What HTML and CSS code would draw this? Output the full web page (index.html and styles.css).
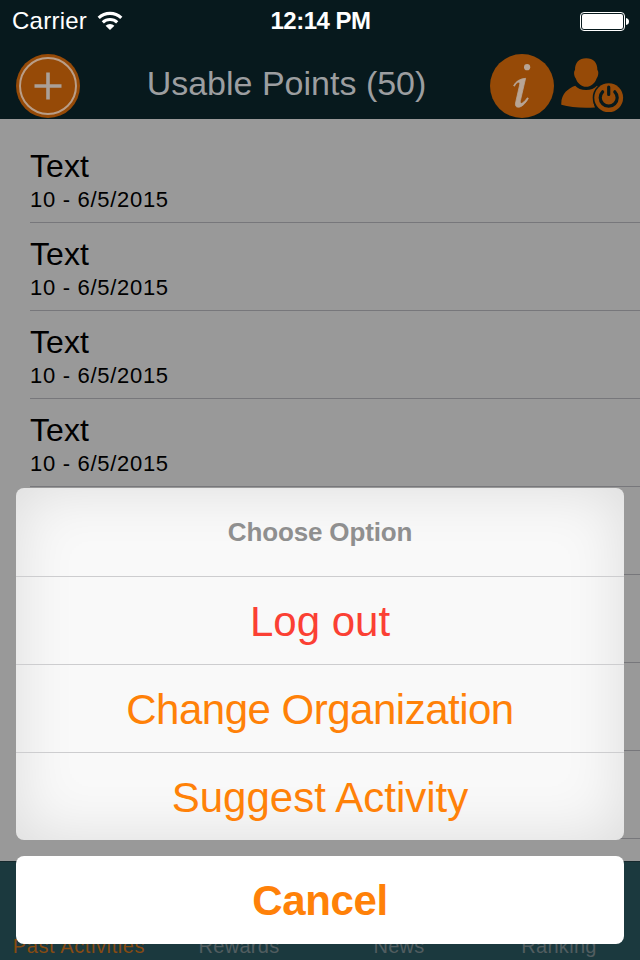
FILE: index.html
```html
<!DOCTYPE html>
<html lang="en">
<head>
    <meta charset="UTF-8">
    <meta name="viewport" content="width=device-width, initial-scale=1.0">
    <title>Usable Points</title>
    <link rel="stylesheet" href="styles.css">
</head>
<body>
    <div class="screen">
        <!-- Header -->
        <header class="header">
            <div class="status-bar">
                <div class="carrier">
                    <span>Carrier</span>
                    <svg class="wifi" width="26" height="20" viewBox="0 0 26 20">
                        <g fill="none" stroke="#fff" stroke-width="3.2">
                            <path d="M1.7 6.8 A16.5 16.5 0 0 1 24.3 6.8"/>
                            <path d="M5.8 11.3 A10.6 10.6 0 0 1 20.2 11.3"/>
                        </g>
                        <path d="M13 19 L8.6 14.8 A6.4 6.4 0 0 1 17.4 14.8 Z" fill="#fff"/>
                    </svg>
                </div>
                <div class="time">12:14 PM</div>
                <div class="battery">
                    <svg width="49" height="19" viewBox="0 0 49 19">
                        <rect x="0.5" y="0.5" width="44" height="18" rx="3.5" fill="none" stroke="#fff"/>
                        <rect x="2" y="2" width="41" height="15" rx="2" fill="#fff"/>
                        <path d="M46 6 Q49 6.5 49 9.5 Q49 12.5 46 13 Z" fill="#fff"/>
                    </svg>
                </div>
            </div>
            <div class="nav-bar">
                <button class="icon-button add">
                    <svg width="64" height="64" viewBox="0 0 64 64">
                        <circle cx="32" cy="32" r="32" fill="#964a07"/>
                        <circle cx="32" cy="32" r="28" fill="none" stroke="#b99e88" stroke-width="2"/>
                        <path d="M32 18.5 V45.5 M18.5 32 H45.5" stroke="#aaa098" stroke-width="3.6"/>
                    </svg>
                </button>
                <h1 class="title">Usable Points (50)</h1>
                <button class="icon-button info">
                    <svg width="64" height="64" viewBox="0 0 64 64">
                        <circle cx="32" cy="32" r="32" fill="#964a07"/>
                        <circle cx="37.1" cy="13.2" r="3.1" fill="#b8a595"/>
                        <path d="M23.6 31.6 C26 27.4 29.6 24.8 35.6 24.3 L30.4 46.6 C29.8 49.6 31.2 50 33 48.6 C34.6 47.4 35.7 46 37.4 43.8 L38.3 44.4 C35.4 49.7 31.5 53.2 28.2 53.2 C25.4 53.2 25 50.8 25.8 47.8 L29.6 31 C30.2 28.4 29.4 27.6 27.6 28.6 C26.4 29.3 25.4 30.4 24.5 32.2 Z" fill="#b8a595" stroke="#b8a595" stroke-width="0.8"/>
                    </svg>
                </button>
                <button class="icon-button user">
                    <svg width="64" height="56" viewBox="0 0 64 56">
                        <path d="M14 12 C14 4.5 18 0.3 25.2 0.3 C32.4 0.3 36.4 4.5 36.4 12 C38 13.5 37.4 18.5 35.6 20.5 C34 25.5 29.5 28.8 25.2 28.8 C20.9 28.8 16.4 25.5 14.8 20.5 C13 18.5 12.4 13.5 14 12 Z" fill="#964a07"/>
                        <path d="M14.2 27.8 C18.5 33.4 31.5 33.4 36 27.8 L38.5 29 C33 33.5 30.5 41 34 49.5 C22 50.2 9 49.6 0.3 46.8 C-0.3 36 7 30.5 14.2 27.8 Z" fill="#964a07"/>
                        <circle cx="47.7" cy="39.7" r="16" fill="#07191d"/>
                        <circle cx="47.7" cy="39.7" r="14.4" fill="#964a07"/>
                        <path d="M41.6 33.8 A8.5 8.5 0 1 0 53.8 33.8 M47.7 29.2 V36.5" fill="none" stroke="#07191d" stroke-width="3.2" stroke-linecap="round"/>
                    </svg>
                </button>
            </div>
        </header>

        <!-- Activities -->
        <ul class="activities">
            <li class="activity"><h2>Text</h2><p>10 - 6/5/2015</p></li>
            <li class="activity"><h2>Text</h2><p>10 - 6/5/2015</p></li>
            <li class="activity"><h2>Text</h2><p>10 - 6/5/2015</p></li>
            <li class="activity"><h2>Text</h2><p>10 - 6/5/2015</p></li>
            <li class="activity"></li>
            <li class="activity"></li>
            <li class="activity"></li>
            <li class="activity"></li>
        </ul>

        <!-- Tabs -->
        <nav class="tab-bar">
            <a class="tab active">Past Activities</a>
            <a class="tab">Rewards</a>
            <a class="tab">News</a>
            <a class="tab">Ranking</a>
        </nav>

        <!-- Action sheet -->
        <div class="action-sheet">
            <div class="options">
                <div class="sheet-title">Choose Option</div>
                <button class="option logout">Log out</button>
                <button class="option organization">Change Organization</button>
                <button class="option suggest">Suggest Activity</button>
            </div>
            <button class="cancel">Cancel</button>
        </div>
    </div>
</body>
</html>
```
FILE: styles.css
```css
* {
    box-sizing: border-box;
    margin: 0;
    padding: 0;
}
body {
    font-family: "Liberation Sans", Arial, sans-serif;
    background-color: #999;
}
button {
    font-family: inherit;
    border: none;
    background: none;
    cursor: pointer;
}
svg {
    display: block;
}
.screen {
    position: relative;
    display: flex;
    flex-direction: column;
    width: 640px;
    height: 960px;
    overflow: hidden;
}
.header {
    height: 119px;
    background-color: #07191d;
}
.status-bar {
    display: grid;
    grid-template-columns: 1fr auto 1fr;
    align-items: center;
    height: 40px;
    padding: 1px 11px 0 12px;
    color: #fff;
    font-size: 24px;
    line-height: 40px;
}
.carrier {
    display: flex;
    align-items: center;
    gap: 10px;
    letter-spacing: 0.25px;
}
.time {
    font-weight: bold;
    letter-spacing: -0.5px;
}
.battery {
    display: flex;
    justify-content: flex-end;
}
.nav-bar {
    display: flex;
    align-items: flex-start;
    padding: 14px 15px 0 16px;
}
.title {
    flex: 1;
    padding-top: 9px;
    padding-left: 3px;
    color: #9c9ea0;
    font-size: 34px;
    font-weight: normal;
    letter-spacing: 0;
    line-height: 40px;
    text-align: center;
}
.user {
    margin-top: 4px;
    margin-left: 7px;
}
.activities {
    flex: 1;
    min-height: 0;
    padding: 16px 0 0 30px;
    list-style: none;
    background-color: #999;
}
.activity {
    height: 88px;
    padding-top: 12px;
    border-bottom: 1px solid #77777b;
    color: #000;
}
.activity h2 {
    font-size: 32px;
    font-weight: normal;
    letter-spacing: 0.1px;
    line-height: 39px;
}
.activity p {
    font-size: 22px;
    letter-spacing: 0.7px;
    line-height: 27px;
}
.tab-bar {
    display: flex;
    align-items: flex-end;
    height: 99px;
    background-color: #1b393e;
    border-top: 1px solid #16292d;
}
.tab {
    flex: 1;
    padding-right: 2px;
    color: #515d60;
    font-size: 20px;
    letter-spacing: 0.3px;
    line-height: 28px;
    text-align: center;
}
.tab.active {
    color: #874b12;
    letter-spacing: 0.6px;
}
.action-sheet {
    position: absolute;
    left: 16px;
    right: 16px;
    bottom: 16px;
}
.options {
    height: 352px;
    margin-bottom: 16px;
    border-radius: 8px;
    background-color: #f9f9f9;
    box-shadow: inset 0 0 60px rgba(0, 0, 0, 0.12);
}
.sheet-title {
    height: 88px;
    color: #8f8f8f;
    font-size: 26px;
    font-weight: bold;
    letter-spacing: -0.15px;
    line-height: 88px;
    text-align: center;
}
.option {
    display: block;
    width: 100%;
    height: 88px;
    padding-top: 2px;
    border-top: 1px solid #cdcdcf;
    color: #ff8108;
    font-size: 42px;
    line-height: 85px;
}
.option.logout {
    color: #fb4034;
}
.organization {
    letter-spacing: -0.5px;
}
.cancel {
    display: block;
    width: 100%;
    height: 88px;
    padding-top: 2px;
    border-radius: 8px;
    background-color: #fff;
    color: #ff8108;
    font-size: 42px;
    font-weight: bold;
    letter-spacing: -0.4px;
    line-height: 86px;
}
```
